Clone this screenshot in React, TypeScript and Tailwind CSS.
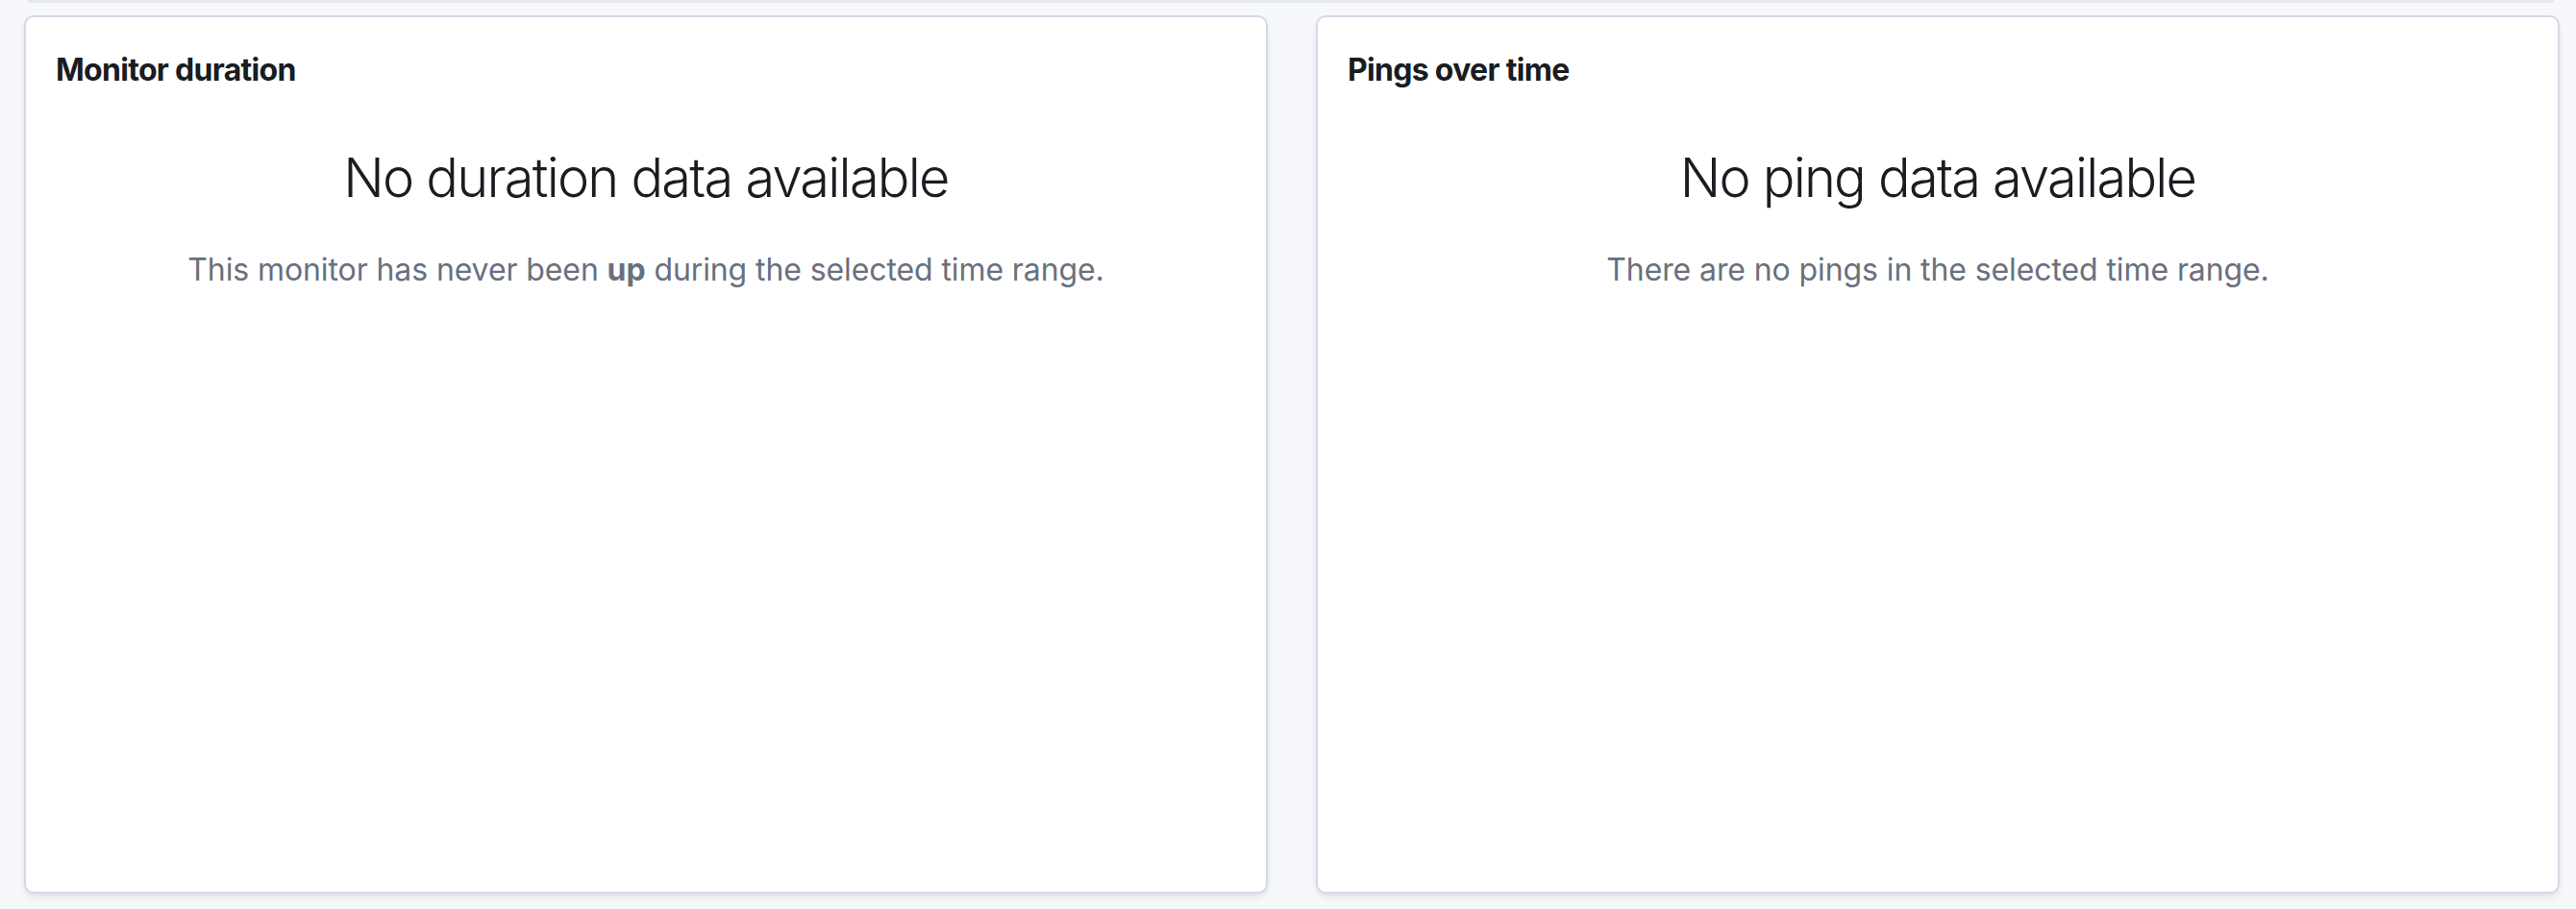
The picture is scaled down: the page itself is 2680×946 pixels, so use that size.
import React from "react";

function Panel({ title, heading, children }: { title: string; heading: string; children: React.ReactNode }) {
  return (
    <div className="flex-1 min-w-0 h-[914px] bg-white border-2 border-[#d3dae6] rounded-[10px] shadow-[0_3px_6px_-1px_rgba(0,0,0,0.08),0_6px_14px_-2px_rgba(0,0,0,0.05)] px-[31px] pt-[31px]">
      <h3 className="text-[32px] leading-[48px] font-bold text-[#1a1c21] tracking-[-0.7px]">{title}</h3>
      <div className="mt-[52px] flex flex-col items-center text-center">
        <h2 className="text-[56px] leading-[72px] font-light text-[#1a1c21] tracking-[-1.8px]">{heading}</h2>
        <p className="mt-[36px] text-[32px] leading-[48px] text-[#69707d] tracking-[-0.1px]">{children}</p>
      </div>
    </div>
  );
}

export default function App() {
  return (
    <div
      className="w-[2680px] h-[946px] bg-[#f7f8fc] overflow-hidden"
      style={{ fontFamily: "Inter, 'Noto Sans', 'Liberation Sans', sans-serif" }}
    >
      <div className="ml-[28px] mr-[23px] h-[3px] bg-[#e6e9f0] rounded-b-[6px]" />
      <div className="flex gap-[50px] pl-[25px] pr-[17px] pt-[13px]">
        <Panel title="Monitor duration" heading="No duration data available">
          This monitor has never been <strong className="font-bold">up</strong> during the selected time range.
        </Panel>
        <Panel title="Pings over time" heading="No ping data available">
          There are no pings in the selected time range.
        </Panel>
      </div>
    </div>
  );
}
